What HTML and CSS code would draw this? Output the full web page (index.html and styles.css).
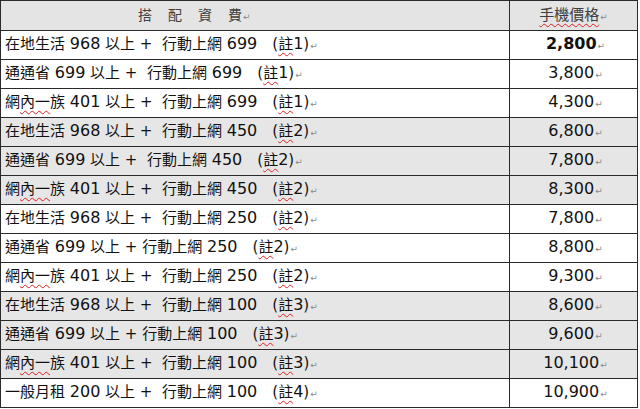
FILE: index.html
```html
<!DOCTYPE html>
<html lang="zh-Hant">
<head>
<meta charset="utf-8">
<title>搭配資費</title>
<link rel="stylesheet" href="styles.css">
</head>
<body>
<table class="plans">
  <colgroup><col class="col-plan"><col class="col-price"></colgroup>
  <thead>
    <tr class="head">
      <th class="h-plan"><span class="spaced">搭配資</span>費<span class="pm">↵</span></th>
      <th class="h-price"><span class="sp">手機價格</span><span class="pm">↵</span></th>
    </tr>
  </thead>
  <tbody>
    <tr><td class="plan">在地生活 <span class="n">968</span> 以上 +&nbsp; 行動上網 <span class="n">699</span>　(<span class="sp">註</span><span class="n">1</span>)<span class="pm">↵</span></td><td class="price"><b>2,800</b><span class="pm">↵</span></td></tr>
    <tr><td class="plan">通通省 <span class="n">699</span> 以上 +&nbsp; 行動上網 <span class="n">699</span>　(<span class="sp">註</span><span class="n">1</span>)<span class="pm">↵</span></td><td class="price">3,800<span class="pm">↵</span></td></tr>
    <tr><td class="plan">網<span class="sp">內一</span>族 <span class="n">401</span> 以上 +&nbsp; 行動上網 <span class="n">699</span>　(<span class="sp">註</span><span class="n">1</span>)<span class="pm">↵</span></td><td class="price">4,300<span class="pm">↵</span></td></tr>
    <tr class="shade"><td class="plan">在地生活 <span class="n">968</span> 以上 +&nbsp; 行動上網 <span class="n">450</span>　(<span class="sp">註</span><span class="n">2</span>)<span class="pm">↵</span></td><td class="price">6,800<span class="pm">↵</span></td></tr>
    <tr class="shade"><td class="plan">通通省 <span class="n">699</span> 以上 +&nbsp; 行動上網 <span class="n">450</span>　(<span class="sp">註</span><span class="n">2</span>)<span class="pm">↵</span></td><td class="price">7,800<span class="pm">↵</span></td></tr>
    <tr class="shade"><td class="plan">網<span class="sp">內一</span>族 <span class="n">401</span> 以上 +&nbsp; 行動上網 <span class="n">450</span>　(<span class="sp">註</span><span class="n">2</span>)<span class="pm">↵</span></td><td class="price">8,300<span class="pm">↵</span></td></tr>
    <tr><td class="plan">在地生活 <span class="n">968</span> 以上 +&nbsp; 行動上網 <span class="n">250</span>　(<span class="sp">註</span><span class="n">2</span>)<span class="pm">↵</span></td><td class="price">7,800<span class="pm">↵</span></td></tr>
    <tr><td class="plan">通通省 <span class="n">699</span> 以上 + 行動上網 <span class="n">250</span>　(<span class="sp">註</span><span class="n">2</span>)<span class="pm">↵</span></td><td class="price">8,800<span class="pm">↵</span></td></tr>
    <tr><td class="plan">網<span class="sp">內一</span>族 <span class="n">401</span> 以上 +&nbsp; 行動上網 <span class="n">250</span>　(<span class="sp">註</span><span class="n">2</span>)<span class="pm">↵</span></td><td class="price">9,300<span class="pm">↵</span></td></tr>
    <tr class="shade"><td class="plan">在地生活 <span class="n">968</span> 以上 +&nbsp; 行動上網 <span class="n">100</span>　(<span class="sp">註</span><span class="n">3</span>)<span class="pm">↵</span></td><td class="price">8,600<span class="pm">↵</span></td></tr>
    <tr class="shade"><td class="plan">通通省 <span class="n">699</span> 以上 + 行動上網 <span class="n">100</span>　(<span class="sp">註</span><span class="n">3</span>)<span class="pm">↵</span></td><td class="price">9,600<span class="pm">↵</span></td></tr>
    <tr class="shade"><td class="plan">網<span class="sp">內一</span>族 <span class="n">401</span> 以上 +&nbsp; 行動上網 <span class="n">100</span>　(<span class="sp">註</span><span class="n">3</span>)<span class="pm">↵</span></td><td class="price">10,100<span class="pm">↵</span></td></tr>
    <tr><td class="plan">一般月租 <span class="n">200</span> 以上 +&nbsp; 行動上網 <span class="n">100</span>　(<span class="sp">註</span><span class="n">4</span>)<span class="pm">↵</span></td><td class="price">10,900<span class="pm">↵</span></td></tr>
  </tbody>
</table>
</body>
</html>
```

FILE: styles.css
```css
html, body {
  margin: 0;
  padding: 0;
  background: #ffffff;
}

.plans {
  border-collapse: collapse;
  table-layout: fixed;
  width: 637px;
  font-family: "DejaVu Sans", "Noto Sans CJK TC", sans-serif;
  font-size: 15px;
  color: #111111;
}

.col-plan { width: 509px; }
.col-price { width: 128px; }

.plans th,
.plans td {
  border: 1px solid #2a2a2a;
  padding: 0;
  line-height: 18px;
  vertical-align: middle;
  white-space: nowrap;
}

.head {
  height: 30px;
  background: #e4e4e4;
}

.plans tbody tr {
  height: 29px;
}

.plans tbody tr.shade {
  background: #e6e6e6;
}

.h-plan {
  text-align: left;
  padding-left: 137px !important;
  font-weight: normal;
  font-size: 14px;
  color: #404040;
}

.spaced {
  letter-spacing: 16px;
}

.h-price {
  text-align: center;
  font-weight: normal;
  font-size: 15px;
  color: #404040;
}

.plan {
  padding-left: 4px !important;
  text-align: left;
}

.n {
  font-size: 16px;
}

.price {
  text-align: center;
  font-size: 16px;
  padding-left: 4px !important;
}

.price b {
  font-weight: bold;
}

.sp {
  text-decoration: underline wavy #e02020;
  text-decoration-thickness: 1px;
  text-underline-offset: 3px;
}

.pm {
  font-size: 9px;
  color: #8a8a8a;
  margin-left: 1px;
}
```
